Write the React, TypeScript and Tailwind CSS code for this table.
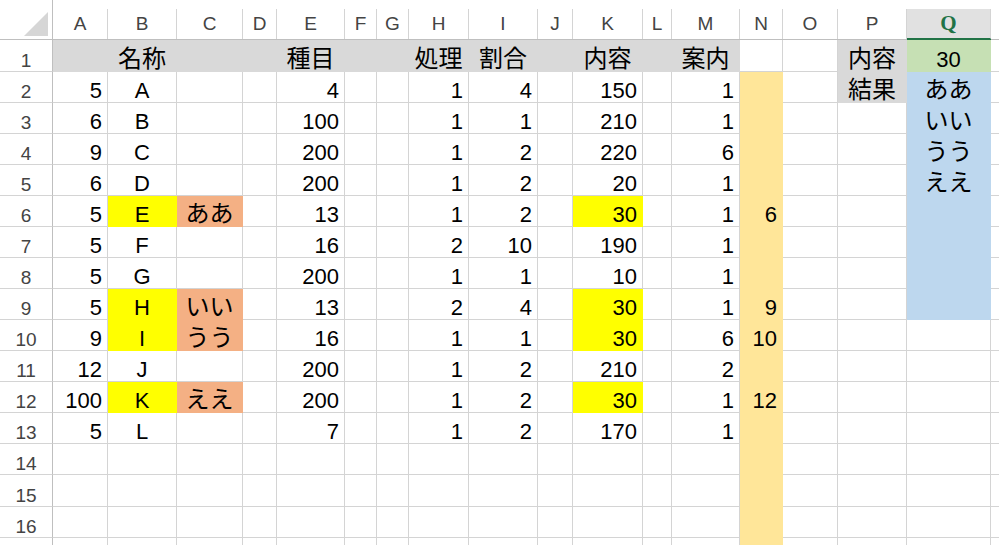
import React from 'react';

type Fill = 'gray' | 'green' | 'blue' | 'yellow' | 'salmon' | 'amber';
type Cell = { v?: string; align?: 'l' | 'c' | 'r'; fill?: Fill; jp?: boolean };

const COLS = ['A', 'B', 'C', 'D', 'E', 'F', 'G', 'H', 'I', 'J', 'K', 'L', 'M', 'N', 'O', 'P', 'Q', 'R'];

const FILL_CLASS: Record<Fill, string> = {
    gray: 'bg-[#d9d9d9] border-[#d9d9d9]',
    green: 'bg-[#c6e0b4] border-[#c6e0b4]',
    blue: 'bg-[#bdd7ee] border-[#bdd7ee]',
    yellow: 'bg-[#ffff00] border-[#ffff00]',
    salmon: 'bg-[#f4b084] border-[#f4b084]',
    amber: 'bg-[#ffe699] border-[#ffe699]',
};

// A, B, C, E, H, I, K, M, N values for rows 2..13
const DATA: [string, string, string, string, string, string, string, string, string][] = [
    ['5', 'A', '', '4', '1', '4', '150', '1', ''],
    ['6', 'B', '', '100', '1', '1', '210', '1', ''],
    ['9', 'C', '', '200', '1', '2', '220', '6', ''],
    ['6', 'D', '', '200', '1', '2', '20', '1', ''],
    ['5', 'E', 'ああ', '13', '1', '2', '30', '1', '6'],
    ['5', 'F', '', '16', '2', '10', '190', '1', ''],
    ['5', 'G', '', '200', '1', '1', '10', '1', ''],
    ['5', 'H', 'いい', '13', '2', '4', '30', '1', '9'],
    ['9', 'I', 'うう', '16', '1', '1', '30', '6', '10'],
    ['12', 'J', '', '200', '1', '2', '210', '2', ''],
    ['100', 'K', 'ええ', '200', '1', '2', '30', '1', '12'],
    ['5', 'L', '', '7', '1', '2', '170', '1', ''],
];

const RESULTS = ['ああ', 'いい', 'うう', 'ええ'];

function buildSheet(): Cell[][] {
    const rows: Cell[][] = [];
    for (let r = 1; r <= 17; r++) {
        const row: Cell[] = COLS.map(() => ({}));
        if (r === 1) {
            for (let c = 0; c <= 12; c++) row[c] = { fill: 'gray' };
            row[1] = { v: '名称', align: 'c', fill: 'gray', jp: true };
            row[4] = { v: '種目', align: 'c', fill: 'gray', jp: true };
            row[7] = { v: '処理', align: 'c', fill: 'gray', jp: true };
            row[8] = { v: '割合', align: 'c', fill: 'gray', jp: true };
            row[10] = { v: '内容', align: 'c', fill: 'gray', jp: true };
            row[12] = { v: '案内', align: 'c', fill: 'gray', jp: true };
            row[15] = { v: '内容', align: 'c', fill: 'gray', jp: true };
            row[16] = { v: '30', align: 'c', fill: 'green' };
        } else {
            row[13] = { fill: 'amber' };
            if (r === 2) row[15] = { v: '結果', align: 'c', fill: 'gray', jp: true };
            if (r <= 9) row[16] = { v: RESULTS[r - 2], align: 'c', fill: 'blue', jp: true };
            const d = DATA[r - 2];
            if (d) {
                const hit = d[2] !== '';
                row[0] = { v: d[0], align: 'r' };
                row[1] = { v: d[1], align: 'c', fill: hit ? 'yellow' : undefined };
                row[2] = hit ? { v: d[2], align: 'c', fill: 'salmon', jp: true } : {};
                row[4] = { v: d[3], align: 'r' };
                row[7] = { v: d[4], align: 'r' };
                row[8] = { v: d[5], align: 'r' };
                row[10] = { v: d[6], align: 'r', fill: hit ? 'yellow' : undefined };
                row[12] = { v: d[7], align: 'r' };
                row[13] = { v: d[8], align: 'r', fill: 'amber' };
            }
        }
        rows.push(row);
    }
    return rows;
}

const ROW_H: Record<number, string> = { 1: 'h-[32px]', 15: 'h-[32px]' };

export default function App() {
    const sheet = buildSheet();

    return (
        <div className="w-[999px] h-[545px] overflow-hidden bg-white font-['Liberation_Sans','Noto_Sans_CJK_JP',sans-serif] text-black">
            <div className="grid w-[1051px] grid-cols-[53px_55px_69px_66px_34px_68px_32px_32px_60px_69px_35px_70px_29px_68px_43px_55px_69px_84px_60px]">
                {/* column headers */}
                <div className="relative h-[40px] border-r border-b border-[#bfbfbf]">
                    <svg className="absolute left-[24px] top-[12px]" width="25" height="25" viewBox="0 0 25 25">
                        <polygon points="24,0 24,24 0,24" fill="#d6d6d6" />
                    </svg>
                </div>
                {COLS.map((col) =>
                    col === 'Q' ? (
                        <div key={col} className="h-[40px] pt-[9px] border-b border-[#217346]">
                            <div className="h-[30px] flex items-center justify-center bg-[#e1e1e1] border-r border-b border-r-[#d4d4d4] border-b-[#217346] font-['Liberation_Serif',serif] font-bold text-[21px] text-[#217346]">
                                {col}
                            </div>
                        </div>
                    ) : (
                        <div key={col} className="h-[40px] pt-[9px] border-b border-[#bfbfbf]">
                            <div className="h-[30px] flex items-center justify-center border-r border-[#d4d4d4] text-[19px] text-[#444]">
                                {col === 'R' ? '' : col}
                            </div>
                        </div>
                    )
                )}

                {/* rows */}
                {sheet.map((row, i) => {
                    const r = i + 1;
                    const h = ROW_H[r] ?? 'h-[31px]';
                    return (
                        <React.Fragment key={r}>
                            <div className={`${h} flex items-end justify-center pb-[1px] border-r border-b border-r-[#bfbfbf] border-b-[#d4d4d4] text-[19px] leading-none text-[#444]`}>
                                {r < 17 ? r : ''}
                            </div>
                            {row.map((cell, c) => {
                                const fill = cell.fill ? FILL_CLASS[cell.fill] : 'border-[#d4d4d4]';
                                const align =
                                    cell.align === 'r' ? 'justify-end pr-[5px]' : cell.align === 'c' ? 'justify-center' : 'justify-start pl-[4px]';
                                const size = cell.jp ? 'text-[24px]' : 'text-[22px]';
                                return (
                                    <div
                                        key={c}
                                        className={`${h} flex items-end whitespace-nowrap leading-none border-r border-b ${fill} ${align} ${size}`}
                                    >
                                        {cell.v}
                                    </div>
                                );
                            })}
                        </React.Fragment>
                    );
                })}
            </div>
        </div>
    );
}
